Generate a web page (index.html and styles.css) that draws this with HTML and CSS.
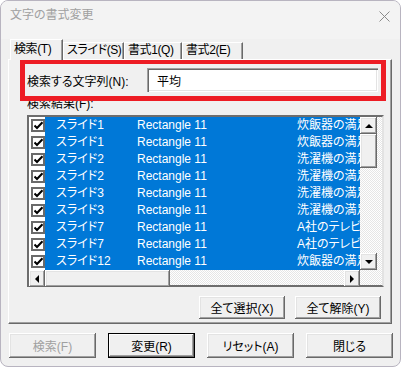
FILE: index.html
```html
<!DOCTYPE html>
<html lang="ja">
<head>
    <meta charset="UTF-8">
    <meta name="viewport" content="width=device-width, initial-scale=1.0">
    <title>文字の書式変更</title>
    <link rel="stylesheet" href="styles.css">
</head>
<body>
    <div class="window">
        <div class="titlebar">
            <span class="title">文字の書式変更</span>
            <svg class="close" width="11" height="11" viewBox="0 0 11 11">
                <path d="M0.5 0.5 L10.5 10.5 M10.5 0.5 L0.5 10.5" stroke="#8a8a8a" stroke-width="1" fill="none"/>
            </svg>
        </div>

        <div class="tabs">
            <div class="tab active">検索(T)</div>
            <div class="tab">スライド(S)</div>
            <div class="tab">書式1(Q)</div>
            <div class="tab">書式2(E)</div>
        </div>

        <div class="panel">
            <div class="search-row">
                <label class="search-label" for="keyword">検索する文字列(N):</label>
                <input class="text-input" type="text" id="keyword" value="平均">
            </div>

            <div class="result-label">検索結果(F):</div>

            <div class="listbox">
                <div class="rows" id="rows"></div>
                <div class="vscroll">
                    <div class="sbtn"><span class="arrow up"></span></div>
                    <div class="vthumb"></div>
                    <div class="vtrack"></div>
                    <div class="sbtn"><span class="arrow down"></span></div>
                </div>
                <div class="hscroll">
                    <div class="sbtn"><span class="arrow left"></span></div>
                    <div class="hthumb"></div>
                    <div class="htrack"></div>
                    <div class="sbtn"><span class="arrow right"></span></div>
                </div>
            </div>

            <div class="panel-buttons">
                <button class="btn">全て選択(X)</button>
                <button class="btn">全て解除(Y)</button>
            </div>

            <!-- 注目枠 -->
            <div class="highlight"></div>
        </div>

        <div class="footer">
            <button class="btn" disabled>検索(F)</button>
            <button class="btn default">変更(R)</button>
            <button class="btn">リセット(A)</button>
            <button class="btn">閉じる</button>
        </div>
    </div>

    <script>
        const items = [
            ['スライド1', 'Rectangle 11', '炊飯器の満足度'],
            ['スライド1', 'Rectangle 11', '炊飯器の満足度'],
            ['スライド2', 'Rectangle 11', '洗濯機の満足度'],
            ['スライド2', 'Rectangle 11', '洗濯機の満足度'],
            ['スライド3', 'Rectangle 11', '洗濯機の満足度'],
            ['スライド3', 'Rectangle 11', '洗濯機の満足度'],
            ['スライド7', 'Rectangle 11', 'A社のテレビの満足度'],
            ['スライド7', 'Rectangle 11', 'A社のテレビの満足度'],
            ['スライド12', 'Rectangle 11', '炊飯器の満足度']
        ];

        const check = '<svg width="9" height="9" viewBox="0 0 9 9"><path d="M0.5 4.5 L3 7 L8.5 1.2" stroke="#000" stroke-width="2" fill="none"/></svg>';

        document.getElementById('rows').innerHTML = items.map(item => `
            <div class="row">
                <div class="cell-check"><span class="checkbox">${check}</span></div>
                <div class="cell slide">${item[0]}</div>
                <div class="cell shape">${item[1]}</div>
                <div class="cell text">${item[2]}</div>
            </div>
        `).join('');
    </script>
</body>
</html>
```

FILE: styles.css
```css
* {
    box-sizing: border-box;
}
body {
    margin: 0;
    font-family: "Liberation Sans", "Noto Sans CJK JP", sans-serif;
    font-size: 12px;
    font-feature-settings: "palt";
    color: #000;
    background: #fff;
}
.window {
    width: 401px;
    height: 367px;
    background: #f0f0f0;
    border: 1px solid #b8b4c0;
    border-radius: 8px;
    overflow: hidden;
}
.titlebar {
    height: 38px;
    display: flex;
    justify-content: space-between;
    align-items: flex-start;
    padding: 6px 10px 0 9px;
    background: #f3f3f3;
}
.title {
    color: #a0a0a0;
    font-size: 12px;
    line-height: 17px;
}
.close {
    margin-top: 4px;
}

/* タブ */
.tabs {
    display: flex;
    align-items: flex-end;
    height: 20px;
    padding-left: 9px;
    position: relative;
    z-index: 1;
}
.tab {
    flex: none;
    height: 17px;
    line-height: 15px;
    padding: 0 0 0 3px;
    background: #f0f0f0;
    border-top: 1px solid #fff;
    border-left: 1px solid #fff;
    border-right: 1px solid #696969;
    box-shadow: inset -1px 0 #a0a0a0;
    white-space: nowrap;
    letter-spacing: -0.4px;
    overflow: hidden;
}
.tab:nth-child(1) { width: 53px; }
.tab:nth-child(2) { width: 61px; }
.tab:nth-child(3) { width: 58px; }
.tab:nth-child(4) { width: 61px; }
.tab.active {
    height: 21px;
    margin-bottom: -1px;
    padding-top: 2px;
    padding-left: 3px;
}

/* パネル */
.panel {
    position: relative;
    margin-left: 7px;
    width: 384px;
    height: 265px;
    border-top: 1px solid #fff;
    border-left: 1px solid #fff;
    border-right: 1px solid #696969;
    border-bottom: 1px solid #696969;
    box-shadow: inset -1px -1px #a0a0a0;
    padding: 8px 0 0 18px;
}
.search-row {
    display: flex;
    align-items: center;
    height: 24px;
}
.search-label {
    width: 120px;
}
.text-input {
    width: 231px;
    height: 24px;
    border: none;
    background: #fff;
    box-shadow: inset 1px 1px #a0a0a0, inset 2px 2px #696969, inset -1px -1px #fff, inset -2px -2px #e3e3e3;
    font-family: inherit;
    font-size: 12px;
    font-feature-settings: "palt";
    padding: 0 0 0 10px;
    outline: none;
}
.result-label {
    margin-top: 5px;
    line-height: 14px;
}

/* リスト */
.listbox {
    margin-top: 4px;
    width: 357px;
    height: 172px;
    border: 2px solid #6d6d6d;
    border-right-color: #e3e3e3;
    border-bottom-color: #6d6d6d;
    display: grid;
    grid-template-columns: 331px 17px;
    grid-template-rows: 153px 17px;
    background: repeating-conic-gradient(#fff 0 25%, #e6e6e6 0 50%) 0 0 / 2px 2px;
}
.rows {
    overflow: hidden;
    background: #fff;
}
.row {
    display: grid;
    grid-template-columns: 16px 81px 160px 74px;
    height: 17px;
    line-height: 17px;
    white-space: nowrap;
}
.cell-check {
    background: #fff;
    padding: 2px 0 0 2px;
}
.checkbox {
    display: flex;
    align-items: center;
    justify-content: center;
    width: 14px;
    height: 13px;
    background: #fff;
    border: 2px solid #6a6a6a;
}
.cell {
    background: #0078d7;
    color: #fff;
    padding-left: 11px;
    overflow: hidden;
}

.vscroll {
    display: flex;
    flex-direction: column;
}
.sbtn {
    width: 17px;
    height: 17px;
    flex: none;
    display: flex;
    align-items: center;
    justify-content: center;
    background: #f0f0f0;
    box-shadow: inset -1px -1px #696969, inset 1px 1px #fff, inset -2px -2px #a0a0a0, inset 2px 2px #e3e3e3;
}
.vthumb {
    height: 34px;
    flex: none;
    background: #f0f0f0;
    box-shadow: inset -1px -1px #696969, inset 1px 1px #fff, inset -2px -2px #a0a0a0, inset 2px 2px #e3e3e3;
}
.vtrack, .htrack {
    flex: 1;
}
.hscroll {
    display: flex;
}
.hscroll .sbtn {
    width: 16px;
}
.hthumb {
    width: 125px;
    flex: none;
    background: #f0f0f0;
    box-shadow: inset -1px -1px #696969, inset 1px 1px #fff, inset -2px -2px #a0a0a0, inset 2px 2px #e3e3e3;
}
.arrow {
    width: 0;
    height: 0;
    border: 4px solid transparent;
}
.arrow.up {
    border-bottom-color: #000;
    border-top-width: 0;
}
.arrow.down {
    border-top-color: #000;
    border-bottom-width: 0;
}
.arrow.left {
    border-right-color: #000;
    border-left-width: 0;
}
.arrow.right {
    border-left-color: #000;
    border-right-width: 0;
}

.panel-buttons {
    display: flex;
    justify-content: flex-end;
    gap: 10px;
    margin-top: 9px;
    padding-right: 10px;
}
.btn {
    width: 86px;
    height: 23px;
    border: none;
    background: #f0f0f0;
    box-shadow: inset -1px -1px #696969, inset 1px 1px #fff, inset -2px -2px #a0a0a0, inset 2px 2px #e3e3e3;
    font-family: inherit;
    font-size: 12px;
    font-feature-settings: "palt";
    color: #000;
    padding: 0;
}
.btn:disabled {
    color: #a0a0a0;
}
.btn.default {
    box-shadow: inset 0 0 0 1px #000, inset -2px -2px #696969, inset 2px 2px #fff, inset -3px -3px #a0a0a0;
}

.highlight {
    position: absolute;
    left: 11px;
    top: 0;
    width: 366px;
    height: 41px;
    border: 5px solid #ed1c24;
    border-top-width: 4px;
    pointer-events: none;
}

.footer {
    display: flex;
    gap: 12px;
    padding: 9px 0 0 8px;
}
.footer .btn {
    width: 87px;
    height: 25px;
}
```
